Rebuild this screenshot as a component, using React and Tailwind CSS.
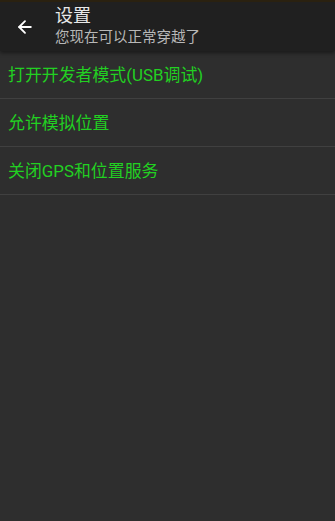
import { ArrowLeft } from "lucide-react";

const items = ["打开开发者模式(USB调试)", "允许模拟位置", "关闭GPS和位置服务"];

export default function App() {
  return (
    <div
      className="w-[335px] h-[521px] bg-[#2e2e2e] flex flex-col overflow-hidden"
      style={{ fontFamily: 'Roboto, "Noto Sans CJK SC", sans-serif' }}
    >
      <header className="h-[51px] bg-[#202020] border-t-2 border-[#2a2110] flex items-center shadow-[0_2px_4px_rgba(0,0,0,0.45)] relative z-10">
        <div className="w-[55px] flex justify-center pr-[5px]">
          <ArrowLeft className="w-5 h-5 text-white" strokeWidth={2.2} />
        </div>
        <div className="flex flex-col leading-none">
          <span className="text-[18px] text-[#e8e8e8] leading-[21px] -mt-[1px]">设置</span>
          <span className="text-[14.5px] text-[#b8b8b8] leading-[19px] mt-[2px]">您现在可以正常穿越了</span>
        </div>
      </header>
      <ul>
        {items.map((item) => (
          <li
            key={item}
            className="h-[48px] flex items-center px-[8px] pt-[2px] border-b border-[#404040] text-[16.9px] text-[#22d022]"
          >
            {item}
          </li>
        ))}
      </ul>
    </div>
  );
}
